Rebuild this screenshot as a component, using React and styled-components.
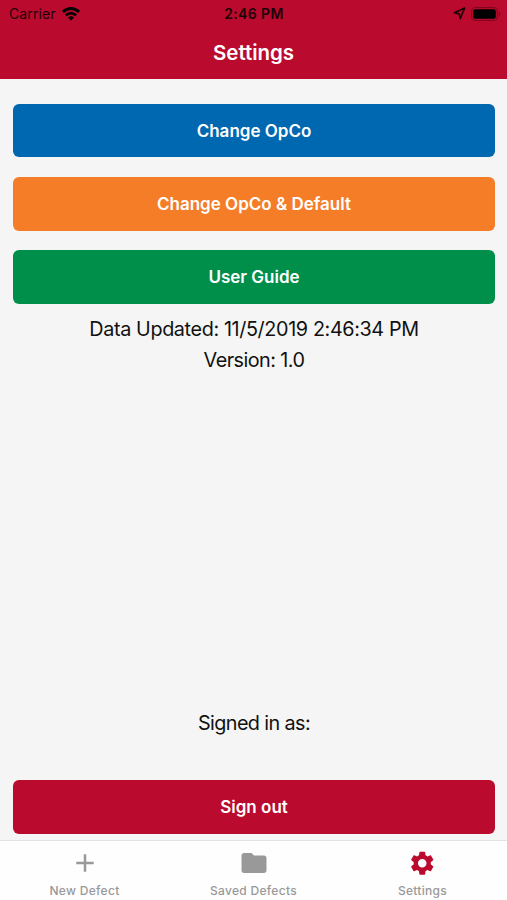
import styled, { createGlobalStyle } from 'styled-components';
import { MdAdd, MdFolder, MdSettings } from 'react-icons/md';

export default function App() {
  const actions = [
    { name: 'Change OpCo', color: '#0067b1' },
    { name: 'Change OpCo & Default', color: '#f57d28' },
    { name: 'User Guide', color: '#008f4a' },
  ];

  const tabs = [
    { name: 'New Defect', icon: <MdAdd size={30} /> },
    { name: 'Saved Defects', icon: <MdFolder size={30} /> },
    { name: 'Settings', icon: <MdSettings size={28.5} />, active: true },
  ];

  return (
    <>
      <GlobalStyle />
      <StyledScreen>
        <StyledHeader>
          <StatusBar />
          <StyledTitle>Settings</StyledTitle>
        </StyledHeader>
        <StyledContent>
          <StyledActions>
            {actions.map((action) => (
              <StyledButton key={action.name} $color={action.color}>
                {action.name}
              </StyledButton>
            ))}
          </StyledActions>
          <StyledInfo>
            <StyledText $spacing='-0.38px'>
              Data Updated: 11/5/2019 2:46:34 PM
            </StyledText>
            <StyledText $spacing='-0.55px'>Version: 1.0</StyledText>
          </StyledInfo>
          <StyledAccount>
            <StyledText $spacing='-0.6px'>Signed in as:</StyledText>
            <StyledButton $color='#ba0a2d'>Sign out</StyledButton>
          </StyledAccount>
        </StyledContent>
        <StyledTabBar>
          {tabs.map((tab) => (
            <StyledTab key={tab.name}>
              <StyledTabIcon $active={tab.active}>{tab.icon}</StyledTabIcon>
              <span>{tab.name}</span>
            </StyledTab>
          ))}
        </StyledTabBar>
      </StyledScreen>
    </>
  );
}

function StatusBar() {
  return (
    <StyledStatusBar>
      <StyledCarrier>
        <span>Carrier</span>
        <svg width='18' height='14' viewBox='0 0 18 14'>
          <g fill='none' stroke='currentColor' strokeWidth='2.7'>
            <path d='M0.9 4.9Q9 -1.9 17.1 4.9' />
            <path d='M3.9 8.3Q9 4 14.1 8.3' />
          </g>
          <path d='M6.1 10.5Q9 8.2 11.9 10.5L9 13.7z' fill='currentColor' />
        </svg>
      </StyledCarrier>
      <StyledTime>2:46 PM</StyledTime>
      <StyledIndicators>
        <svg width='13' height='13' viewBox='0 0 13 13'>
          <path
            d='M11.6 1.1L1.4 5.8L6.2 6.9L7.2 11.6z'
            fill='none'
            stroke='#1c0207'
            strokeWidth='1.6'
            strokeLinejoin='round'
          />
        </svg>
        <svg width='31' height='14' viewBox='0 0 31 14'>
          <rect
            x='0.6'
            y='0.6'
            width='25.8'
            height='12.8'
            rx='3.4'
            fill='none'
            stroke='#7c061d'
            strokeWidth='1'
          />
          <rect x='2.2' y='2.2' width='22.6' height='9.6' rx='2' fill='#000' />
          <path d='M27.8 4.7Q29.6 5.4 29.6 7T27.8 9.3z' fill='#7c061d' />
        </svg>
      </StyledIndicators>
    </StyledStatusBar>
  );
}

const GlobalStyle = createGlobalStyle`
  body {
    margin: 0;
    font-family: Inter, 'Liberation Sans', sans-serif;
  }

  svg {
    display: block;
  }
`;

const StyledScreen = styled.div`
  display: flex;
  flex-direction: column;
  height: 900px;
  overflow: hidden;
  background-color: #f5f5f5;
`;

const StyledHeader = styled.header`
  height: 79px;
  color: #fff;
  background-color: #ba0a2d;
`;

const StyledStatusBar = styled.div`
  display: grid;
  grid-template-columns: 1fr auto 1fr;
  align-items: center;
  height: 27px;
  padding: 0 5px 0 9px;
  color: #1c0207;
  font-size: 14px;
`;

const StyledCarrier = styled.div`
  display: flex;
  align-items: center;
  gap: 6px;
  letter-spacing: 0.1px;

  svg {
    color: #000;
  }
`;

const StyledTime = styled.div`
  margin-left: -3px;
  font-size: 14px;
  font-weight: 600;
  letter-spacing: 0.4px;
`;

const StyledIndicators = styled.div`
  display: flex;
  align-items: center;
  justify-content: flex-end;
  gap: 5px;
`;

const StyledTitle = styled.h1`
  margin: 0;
  font-size: 20.5px;
  font-weight: 600;
  line-height: 52px;
  letter-spacing: -0.05px;
  text-align: center;
`;

const StyledContent = styled.main`
  display: flex;
  flex-direction: column;
  flex: 1;
  padding: 24.7px 12px 6px 13px;
`;

const StyledActions = styled.div`
  display: flex;
  flex-direction: column;
  gap: 19.6px;
`;

const StyledButton = styled.button`
  width: 100%;
  height: 53.7px;
  padding: 0;
  border: 0;
  border-radius: 6px;
  color: #fff;
  background-color: ${({ $color }) => $color};
  font-family: inherit;
  font-size: 17px;
  font-weight: 600;
  cursor: pointer;
`;

const StyledInfo = styled.div`
  padding-top: 10px;
`;

const StyledText = styled.p`
  margin: 0;
  color: #111;
  font-size: 19.8px;
  line-height: 31px;
  letter-spacing: ${({ $spacing }) => $spacing};
  text-align: center;
`;

const StyledAccount = styled.div`
  display: flex;
  flex-direction: column;
  gap: 41px;
  margin-top: auto;
`;

const StyledTabBar = styled.nav`
  display: grid;
  grid-template-columns: repeat(3, 1fr);
  height: 59px;
  border-top: 1px solid #e2e2e2;
  background-color: #fefefe;
`;

const StyledTab = styled.div`
  display: flex;
  flex-direction: column;
  align-items: center;
  color: #999;
  font-size: 12px;
  font-weight: 500;
  line-height: 16px;
  letter-spacing: 0.3px;
`;

const StyledTabIcon = styled.div`
  display: flex;
  align-items: center;
  height: 30px;
  margin: 7px 0 5px;
  color: ${({ $active }) => ($active ? '#ba0a2d' : '#999')};
`;
